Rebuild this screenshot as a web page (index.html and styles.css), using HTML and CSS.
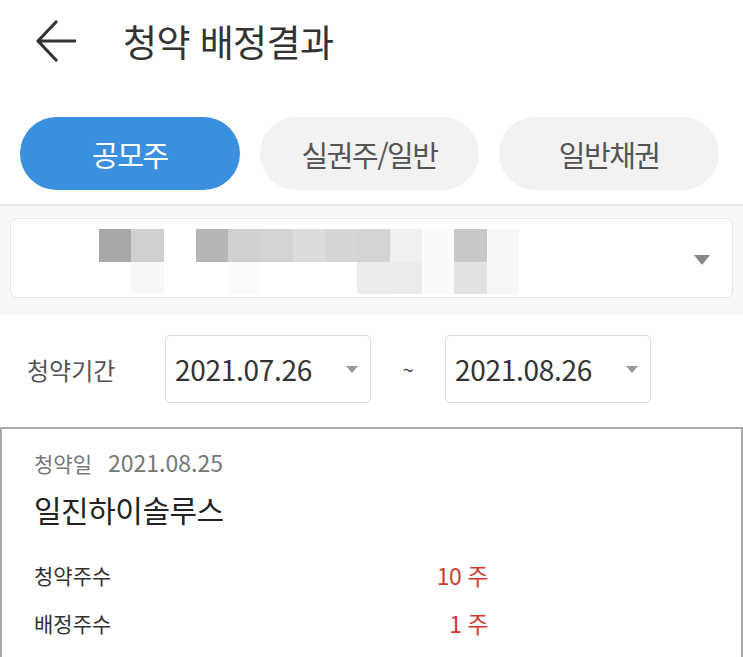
FILE: index.html
```html
<!DOCTYPE html>
<html lang="ko">
<head>
<meta charset="utf-8">
<link rel="stylesheet" href="styles.css">
</head>
<body>
<div class="page">
  <header class="header">
    <svg class="back" width="40" height="42" viewBox="0 0 40 42"><path d="M20 2 L2 21 L20 40 M2 21 L39 21" fill="none" stroke="#333" stroke-width="3.2" stroke-linecap="round" stroke-linejoin="round"/></svg>
    <h1 class="title">청약 배정결과</h1>
  </header>
  <nav class="tabs">
    <div class="tab active">공모주</div>
    <div class="tab">실권주/일반</div>
    <div class="tab">일반채권</div>
  </nav>
  <section class="account">
    <div class="select">
      <div class="mosaic">
        <span style="background:#a8a8a8"></span><span style="background:#cfcfcf"></span><span></span><span style="background:#b6b6b6"></span><span style="background:#d0d0d0"></span><span style="background:#d3d3d3"></span><span style="background:#dcdcdc"></span><span style="background:#d6d6d6"></span><span style="background:#d4d4d4"></span><span style="background:#efefef"></span><span style="background:#fafafa"></span><span style="background:#c8c8c8"></span><span style="background:#f8f8f8"></span>
        <span></span><span style="background:#f8f8f8"></span><span></span><span></span><span style="background:#fbfbfb"></span><span></span><span></span><span></span><span style="background:#ececec"></span><span style="background:#ebebeb"></span><span style="background:#fafafa"></span><span style="background:#e2e2e2"></span><span style="background:#f6f6f6"></span>
      </div>
      <span class="caret big"></span>
    </div>
  </section>
  <section class="period">
    <span class="period-label">청약기간</span>
    <div class="date-box"><span class="date">2021.07.26</span><span class="caret small"></span></div>
    <span class="tilde">~</span>
    <div class="date-box"><span class="date">2021.08.26</span><span class="caret small"></span></div>
  </section>
  <section class="card">
    <div class="sub-date"><span class="sub-label">청약일</span><span>2021.08.25</span></div>
    <div class="name">일진하이솔루스</div>
    <div class="rows">
      <div class="row"><span class="row-label">청약주수</span><span class="row-value">10 주</span></div>
      <div class="row"><span class="row-label">배정주수</span><span class="row-value">1 주</span></div>
    </div>
  </section>
</div>
</body>
</html>
```
FILE: styles.css
```css
* { box-sizing: border-box; }
html, body { margin: 0; padding: 0; background: #fff; }
body { font-family: "Noto Sans CJK KR", "Noto Sans", sans-serif; color: #333; }
.page { width: 743px; height: 657px; overflow: hidden; }

.header { height: 88px; display: flex; align-items: center; padding-left: 36px; padding-bottom: 6px; }
.back { display: block; }
.title { margin: 0 0 0 47px; font-size: 37px; font-weight: 400; letter-spacing: -0.6px; color: #333; line-height: 1; }

.tabs { display: flex; gap: 20px; padding: 29px 24px 14px 20px; }
.tab { width: 220px; height: 73px; border-radius: 37px; background: #f2f2f2; color: #555; font-size: 29px; letter-spacing: -1.5px; display: flex; align-items: center; justify-content: center; }
.tab.active { background: #3a8fdf; color: #fff; }

.account { border-top: 2px solid #e8e8e8; background: #f8f8f8; padding: 12px 10px 17px 10px; }
.select { height: 80px; background: #fff; border: 1.5px solid #e6e6e6; border-radius: 7px; display: flex; align-items: center; padding: 0 22px 0 88px; justify-content: space-between; }
.mosaic { display: grid; grid-template-columns: repeat(13, 32.3px); grid-template-rows: 33px 32px; margin-top: 7px; }
.caret { width: 0; height: 0; border-left-style: solid; border-right-style: solid; border-top-style: solid; border-left-color: transparent; border-right-color: transparent; }
.caret.big { border-width: 10px 8px 0 8px; border-top-color: #888; margin-top: 4px; }
.caret.small { border-width: 7px 6px 0 6px; border-top-color: #999; }

.period { display: flex; align-items: center; padding: 20px 0 24px 27px; }
.period-label { font-size: 24px; color: #555; letter-spacing: 0; width: 138px; }
.date-box { width: 206px; height: 68px; border: 1.5px solid #ddd; border-radius: 4px; display: flex; align-items: center; justify-content: space-between; padding: 0 12px 0 9px; }
.date { font-size: 28px; color: #333; letter-spacing: -0.3px; }
.tilde { width: 74px; text-align: center; font-size: 20px; color: #444; }

.card { border: 2px solid #aaa; border-bottom: none; padding: 16px 31px 0 32px; height: 240px; }
.sub-date { font-size: 21px; color: #777; display: flex; align-items: baseline; gap: 16px; }
.sub-label { letter-spacing: 0; }
.sub-date span:last-child { font-size: 23px; }
.name { font-size: 30px; color: #222; letter-spacing: -0.5px; margin-top: 8px; }
.rows { margin-top: 28px; width: 454px; display: flex; flex-direction: column; gap: 16px; }
.row { display: flex; justify-content: space-between; align-items: center; font-size: 21px; height: 32px; }
.row-label { color: #333; letter-spacing: 0; }
.row-value { color: #cf3b2c; font-size: 23px; letter-spacing: -0.5px; }
```
